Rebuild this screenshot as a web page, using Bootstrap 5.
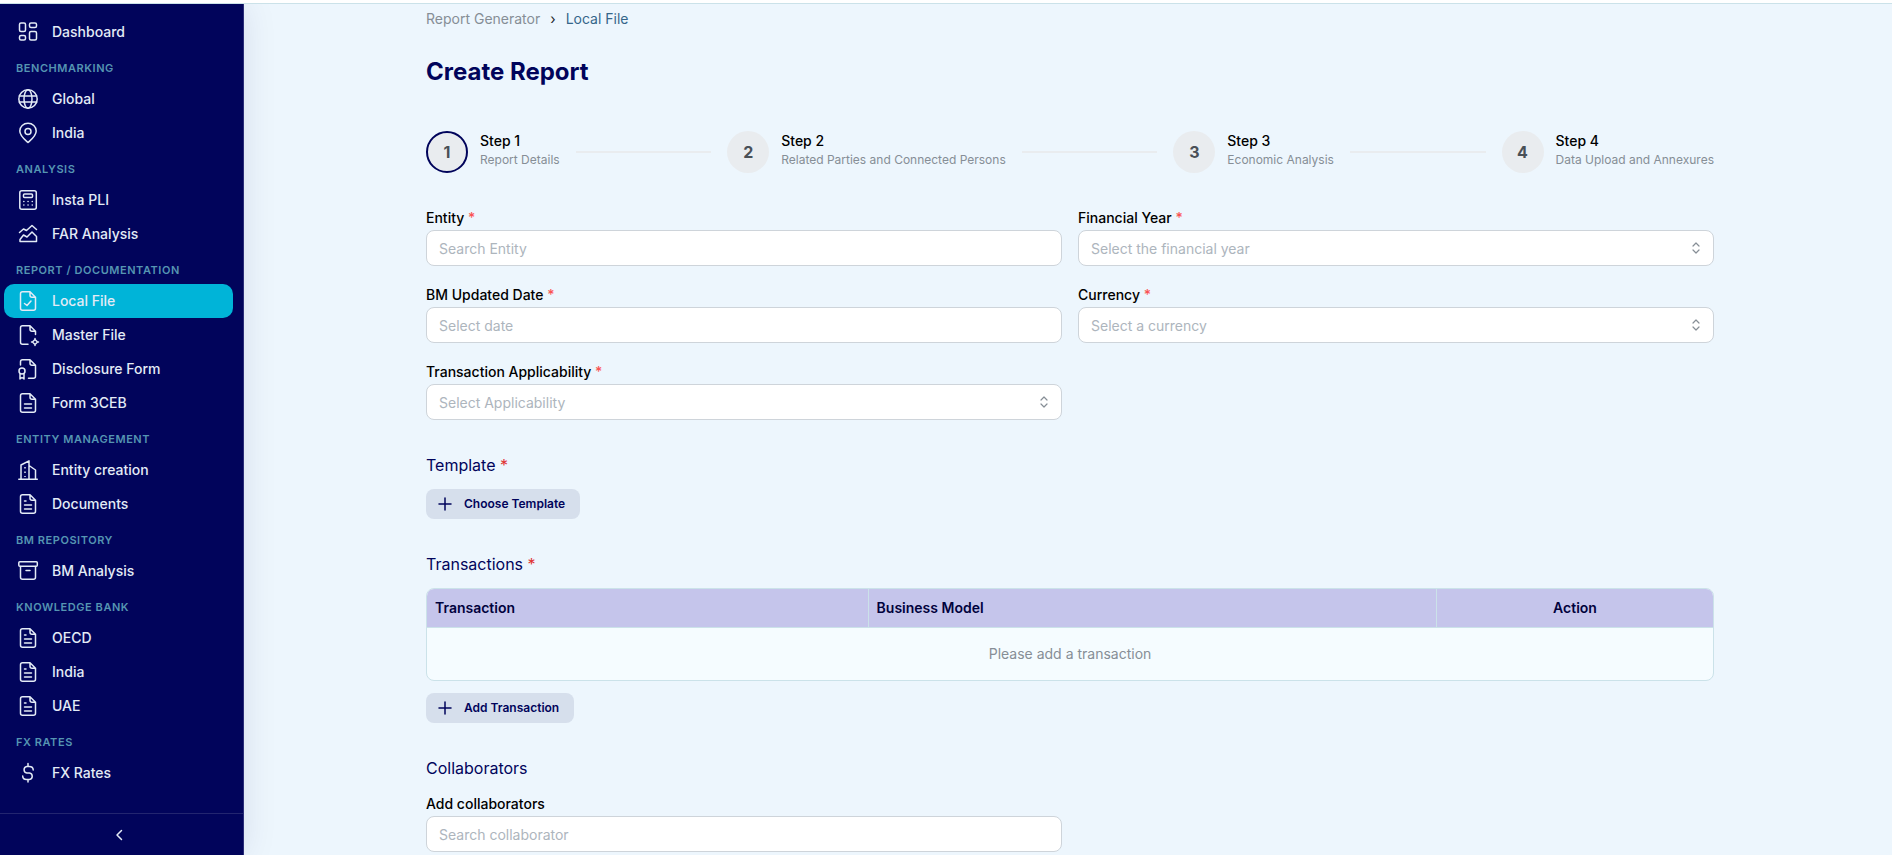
<!DOCTYPE html>
<html lang="en">
<head>
<meta charset="utf-8">
<meta name="viewport" content="width=device-width, initial-scale=1">
<title>Create Report</title>
<link href="https://cdn.jsdelivr.net/npm/bootstrap@5.3.0/dist/css/bootstrap.min.css" rel="stylesheet">
<style>
  :root { --navy: #01045b; --page: #edf6fd; --line: #cbe2e9; --muted: #868e96; }
  body { font-family: Inter, "Liberation Sans", sans-serif; font-size: 14px; line-height: 20px; color: #000; background: var(--page); }
  svg { fill: none; stroke: currentColor; stroke-width: 1.5; stroke-linecap: round; stroke-linejoin: round; flex: none; }
  a { text-decoration: none; }

  .topbar { height: 4px; background: #fff; border-bottom: 1px solid var(--line); }
  .sidebar { width: 244px; background: var(--navy); border-right: 1px solid #2b2e78; box-shadow: 0 0 32px rgba(1, 4, 91, .1); z-index: 1; }
  .side-list { padding: 11px 10px 0 4px; }
  .side-link { display: flex; align-items: center; gap: 12px; height: 34px; padding: 0 12px; border-radius: 10px; font-weight: 500; color: #e3ebf6; }
  .side-link svg { width: 24px; height: 24px; }
  .side-link:hover { color: #fff; }
  .side-link.active { background: #00b4d8; }
  .side-title { margin: 0; padding: 11px 12px 6px; font-size: 11px; line-height: 16px; font-weight: 600; letter-spacing: .05em; text-transform: uppercase; color: #5595b2; }
  .side-toggle { height: 42px; padding: 0 6px 0 0; border: 0; border-top: 1px solid #22256f; background: none; color: #e3ebf6; }

  .page-main { padding-left: 4px; }
  .page-body { max-width: 1320px; padding: 5px 16px 4px; }
  .crumbs { gap: 10px; margin-bottom: 28px; color: var(--muted); }
  .crumbs a { color: inherit; }
  .crumbs .current { color: #35668a; }
  h1 { font-size: 24px; line-height: 30px; font-weight: 700; color: var(--navy); margin-bottom: 44px; }

  .steps { gap: 16px; margin-bottom: 35px; }
  .step { gap: 12px; }
  .step-dot { width: 42px; height: 42px; border-radius: 50%; background: #e9ecef; color: #495057; font-size: 16px; font-weight: 700; }
  .step-dot.current { border: 2px solid var(--navy); }
  .step-text { padding-bottom: 4px; }
  .step-name { font-weight: 500; }
  .step-note { font-size: 12px; line-height: 18px; color: var(--muted); }
  .step-line { height: 2px; background: #e9ecef; }

  .fields { --bs-gutter-x: 16px; --bs-gutter-y: 19px; }
  .field-label { display: block; font-weight: 500; margin-bottom: 2px; }
  .req { color: #fa5252; }
  .field-box { height: 36px; padding: 0 12px; border: 1px solid #ced4da; border-radius: 8px; font-size: 14px; color: #adb5bd; background: #fff; }
  .field-box::placeholder { color: #adb5bd; }
  .field-box:focus { box-shadow: none; border-color: var(--navy); }
  .picker svg { position: absolute; right: 10px; top: 10px; width: 16px; height: 16px; stroke-width: 1.2; color: #868e96; pointer-events: none; }

  .block { margin-top: 33px; }
  h2 { font-size: 16px; line-height: 24px; font-weight: 400; color: var(--navy); margin: 0 0 12px; }
  .people h2 { margin-bottom: 14px; }
  h2 .req { color: #e03131; }
  .add-btn { display: inline-flex; align-items: center; gap: 10px; height: 30px; padding: 0 15px 0 10px; border: 0; border-radius: 8px; background: #d6dfec; color: var(--navy); font-size: 12px; font-weight: 600; vertical-align: top; }
  .add-btn svg { width: 18px; height: 18px; }

  .grid-frame { border: 1px solid var(--line); border-radius: 8px; overflow: hidden; background: #f5fcff; margin-bottom: 12px; }
  .grid-frame table { table-layout: fixed; }
  .grid-frame th { height: 38px; padding: 0 8px; background: #c5c5eb; border-bottom: 1px solid var(--line); font-weight: 600; color: #01023d; }
  .grid-frame th + th { border-left: 1px solid var(--line); }
  .grid-frame td { height: 53px; color: var(--muted); text-align: center; }
</style>
</head>
<body>
<svg class="d-none">
  <symbol id="i-doc" viewBox="0 0 24 24"><path d="M14 2.800H6.500a2 2 0 0 0-2 2v14.400a2 2 0 0 0 2 2h11a2 2 0 0 0 2-2V8.200L14 2.800v3.400a2 2 0 0 0 2 2h3.500M8.500 9h1.500M8.500 13h7M8.500 17h7"/></symbol>
  <symbol id="i-sort" viewBox="0 0 16 16"><path d="M5 6l3-3 3 3M5 10l3 3 3-3"/></symbol>
  <symbol id="i-plus" viewBox="0 0 18 18"><path d="M9 3v12M3 9h12"/></symbol>
</svg>
<div class="vh-100 d-flex flex-column">
  <header class="topbar flex-shrink-0"></header>
  <div class="d-flex flex-grow-1 overflow-hidden">

    <aside class="sidebar flex-shrink-0 d-flex flex-column">
      <nav class="side-list flex-grow-1 overflow-hidden">
        <a class="side-link" href="#"><svg viewBox="0 0 24 24"><rect x="3.500" y="3" width="6" height="8.500" rx="1.500"/><rect x="13.500" y="3" width="7" height="4.500" rx="1.500"/><rect x="3.500" y="15.500" width="6" height="4.500" rx="1.500"/><rect x="13.500" y="11.500" width="7" height="8.500" rx="1.500"/></svg>Dashboard</a>
        <p class="side-title">Benchmarking</p>
        <a class="side-link" href="#"><svg viewBox="0 0 24 24"><circle cx="12" cy="12" r="9.200"/><ellipse cx="12" cy="12" rx="4" ry="9.200"/><path d="M3.300 9h17.400M3.300 15h17.400"/></svg>Global</a>
        <a class="side-link" href="#"><svg viewBox="0 0 24 24"><path d="M12 21.500c-1.800-1.700-8.200-6.300-8.200-11.500a8.200 7.800 0 0 1 16.400 0c0 5.200-6.400 9.800-8.200 11.500z"/><circle cx="12" cy="10.500" r="3"/></svg>India</a>
        <p class="side-title">Analysis</p>
        <a class="side-link" href="#"><svg viewBox="0 0 24 24"><rect x="3.800" y="2.800" width="16.500" height="18.500" rx="2"/><rect x="7.500" y="6" width="9" height="3.500" rx="1"/><path d="M7.800 13.500h.1M12 13.500h.1M16.200 13.500h.1M7.800 17h.1M12 17h.1M16.200 17h.1"/></svg>Insta PLI</a>
        <a class="side-link" href="#"><svg viewBox="0 0 24 24"><path d="M3.500 10.500 7.500 7l3 1.500L16 3.500l4.500 4M4 19.500h16.500v-5L16 10l-5 5-3.500-2L4 17.500z"/></svg>FAR Analysis</a>
        <p class="side-title">Report / Documentation</p>
        <a class="side-link active" href="#" aria-current="page"><svg viewBox="0 0 24 24"><path d="M14 2.800H6.500a2 2 0 0 0-2 2v14.400a2 2 0 0 0 2 2h11a2 2 0 0 0 2-2V8.200L14 2.800v3.400a2 2 0 0 0 2 2h3.500M8.500 14.500l2.500 2 4-4.500"/></svg>Local File</a>
        <a class="side-link" href="#"><svg viewBox="0 0 24 24"><path d="M12 21.200H6.500a2 2 0 0 1-2-2V4.800a2 2 0 0 1 2-2H14l5.500 5.400v3.300M14 2.800v3.400a2 2 0 0 0 2 2h3.500M19 15.500v1.500M19 21.500v1M15.500 19h1M21.500 19h1M19 16.500l2.500 2.500-2.500 2.500-2.500-2.500z"/></svg>Master File</a>
        <a class="side-link" href="#"><svg viewBox="0 0 24 24"><path d="M4.500 8V4.800a2 2 0 0 1 2-2H14l5.500 5.400v11a2 2 0 0 1-2 2h-5M14 2.800v3.400a2 2 0 0 0 2 2h3.500"/><circle cx="6" cy="14" r="3"/><path d="M4 17v5l2-1.500L8 22v-5"/></svg>Disclosure Form</a>
        <a class="side-link" href="#"><svg viewBox="0 0 24 24"><path d="M14 2.800H6.500a2 2 0 0 0-2 2v14.400a2 2 0 0 0 2 2h11a2 2 0 0 0 2-2V8.200L14 2.800v3.400a2 2 0 0 0 2 2h3.500M8.500 13h7M8.500 17h7"/></svg>Form 3CEB</a>
        <p class="side-title">Entity management</p>
        <a class="side-link" href="#"><svg viewBox="0 0 24 24"><path d="M2.800 21.200h18.500M5 21V7l8-4.200V21M13 7.500l6.500 4.500v9"/><path stroke-dasharray="1.500 3" stroke-linecap="butt" d="M9 9v10"/></svg>Entity creation</a>
        <a class="side-link" href="#"><svg><use href="#i-doc"/></svg>Documents</a>
        <p class="side-title">BM Repository</p>
        <a class="side-link" href="#"><svg viewBox="0 0 24 24"><rect x="2.800" y="2.800" width="18.500" height="4.500" rx="1"/><path d="M4.500 7.500v10.700a2 2 0 0 0 2 2h11a2 2 0 0 0 2-2V7.500M10 11.500h4"/></svg>BM Analysis</a>
        <p class="side-title">Knowledge bank</p>
        <a class="side-link" href="#"><svg><use href="#i-doc"/></svg>OECD</a>
        <a class="side-link" href="#"><svg><use href="#i-doc"/></svg>India</a>
        <a class="side-link" href="#"><svg><use href="#i-doc"/></svg>UAE</a>
        <p class="side-title">FX Rates</p>
        <a class="side-link" href="#"><svg viewBox="0 0 24 24"><path d="M12 2.500v3M12 18.500v2.500M17.200 9c0-2-1.700-3.500-4-3.500h-2.400a3.300 3.300 0 0 0 0 6.500h2.700a3.300 3.300 0 0 1 0 6.500h-3C8.300 18.500 6.700 17 6.700 15"/></svg>FX Rates</a>
      </nav>
      <button class="side-toggle d-flex align-items-center justify-content-center" type="button" aria-label="Collapse menu"><svg width="16" height="16" viewBox="0 0 16 16"><path d="M10.500 3.500L6 8l4.500 4.500"/></svg></button>
    </aside>

    <main class="page-main flex-grow-1 overflow-auto">
      <div class="page-body mx-auto">
        <nav class="crumbs d-flex" aria-label="Breadcrumb"><a href="#">Report Generator</a><span class="text-dark">›</span><a class="current" href="#">Local File</a></nav>
        <h1>Create Report</h1>

        <div class="steps d-flex align-items-center">
          <div class="step d-flex align-items-center"><div class="step-dot current d-flex align-items-center justify-content-center">1</div><div class="step-text"><div class="step-name">Step 1</div><div class="step-note">Report Details</div></div></div>
          <div class="step-line flex-fill"></div>
          <div class="step d-flex align-items-center"><div class="step-dot d-flex align-items-center justify-content-center">2</div><div class="step-text"><div class="step-name">Step 2</div><div class="step-note">Related Parties and Connected Persons</div></div></div>
          <div class="step-line flex-fill"></div>
          <div class="step d-flex align-items-center"><div class="step-dot d-flex align-items-center justify-content-center">3</div><div class="step-text"><div class="step-name">Step 3</div><div class="step-note">Economic Analysis</div></div></div>
          <div class="step-line flex-fill"></div>
          <div class="step d-flex align-items-center"><div class="step-dot d-flex align-items-center justify-content-center">4</div><div class="step-text"><div class="step-name">Step 4</div><div class="step-note">Data Upload and Annexures</div></div></div>
        </div>

        <form>
          <div class="fields row row-cols-2">
            <div><label class="field-label" for="entity">Entity <span class="req">*</span></label><input class="field-box form-control" id="entity" type="text" placeholder="Search Entity"></div>
            <div><label class="field-label" for="year">Financial Year <span class="req">*</span></label><div class="picker position-relative"><select class="field-box form-control" id="year"><option>Select the financial year</option></select><svg><use href="#i-sort"/></svg></div></div>
            <div><label class="field-label" for="bmdate">BM Updated Date <span class="req">*</span></label><input class="field-box form-control" id="bmdate" type="text" placeholder="Select date"></div>
            <div><label class="field-label" for="currency">Currency <span class="req">*</span></label><div class="picker position-relative"><select class="field-box form-control" id="currency"><option>Select a currency</option></select><svg><use href="#i-sort"/></svg></div></div>
            <div><label class="field-label" for="applic">Transaction Applicability <span class="req">*</span></label><div class="picker position-relative"><select class="field-box form-control" id="applic"><option>Select Applicability</option></select><svg><use href="#i-sort"/></svg></div></div>
          </div>

          <section class="block">
            <h2>Template <span class="req">*</span></h2>
            <button class="add-btn" type="button"><svg><use href="#i-plus"/></svg>Choose Template</button>
          </section>

          <section class="block">
            <h2>Transactions <span class="req">*</span></h2>
            <div class="grid-frame">
              <table class="w-100">
                <colgroup><col style="width:34.3%"><col style="width:44.2%"><col style="width:21.5%"></colgroup>
                <thead><tr><th scope="col">Transaction</th><th scope="col">Business Model</th><th class="text-center" scope="col">Action</th></tr></thead>
                <tbody><tr><td colspan="3">Please add a transaction</td></tr></tbody>
              </table>
            </div>
            <button class="add-btn" type="button"><svg><use href="#i-plus"/></svg>Add Transaction</button>
          </section>

          <section class="block people">
            <h2>Collaborators</h2>
            <div class="fields row row-cols-2"><div><label class="field-label" for="collab">Add collaborators</label><input class="field-box form-control" id="collab" type="text" placeholder="Search collaborator"></div></div>
          </section>
        </form>
      </div>
    </main>
  </div>
</div>
<script src="https://cdn.jsdelivr.net/npm/bootstrap@5.3.0/dist/js/bootstrap.bundle.min.js"></script>
</body>
</html>
